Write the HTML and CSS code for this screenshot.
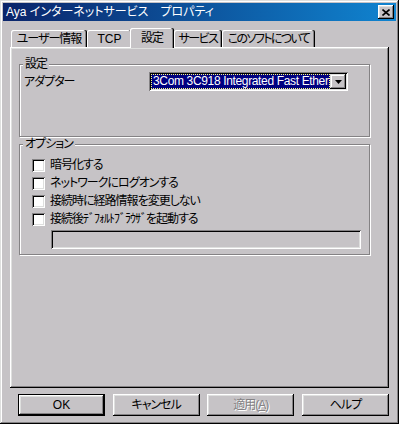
FILE: index.html
```html
<!DOCTYPE html>
<html lang="ja">
<head>
  <meta charset="UTF-8">
  <title>Aya インターネットサービス プロパティ</title>
  <link rel="stylesheet" href="styles.css">
</head>
<body>
  <div class="window">
    <div class="titlebar">
      <span class="title">Aya インターネットサービス　プロパティ</span>
      <button class="close" aria-label="閉じる">
        <svg width="8" height="7" viewBox="0 0 8 7"><path d="M0.5 0.5l7 6M7.5 0.5l-7 6" stroke="#000" stroke-width="1.6" fill="none"/></svg>
      </button>
    </div>

    <div class="content">
      <div class="tabs">
        <div class="tab tab-user">ユーザー情報</div>
        <div class="tab tab-tcp">TCP</div>
        <div class="tab tab-settings active">設定</div>
        <div class="tab tab-service">サービス</div>
        <div class="tab tab-about">このソフトについて</div>
      </div>

      <div class="panel">
        <fieldset class="group group-settings">
          <legend>設定</legend>
          <div class="field-row">
            <label class="field-label">アダプター</label>
            <div class="combo">
              <div class="combo-value"><span class="selected">3Com 3C918 Integrated Fast Ethernet</span></div>
              <div class="combo-btn">
                <svg width="7" height="4" viewBox="0 0 7 4"><path d="M0 0h7L3.5 4z" fill="#000"/></svg>
              </div>
            </div>
          </div>
        </fieldset>

        <fieldset class="group group-options">
          <legend>オプション</legend>
          <label class="check-row"><input type="checkbox"><span>暗号化する</span></label>
          <label class="check-row"><input type="checkbox"><span>ネットワークにログオンする</span></label>
          <label class="check-row"><input type="checkbox"><span>接続時に経路情報を変更しない</span></label>
          <label class="check-row"><input type="checkbox"><span>接続後ﾃﾞﾌｫﾙﾄﾌﾞﾗｳｻﾞを起動する</span></label>
          <input type="text" class="path" disabled>
        </fieldset>
      </div>

      <div class="buttons">
        <button class="btn default">OK</button>
        <button class="btn">キャンセル</button>
        <button class="btn" disabled>適用(<u>A</u>)</button>
        <button class="btn">ヘルプ</button>
      </div>
    </div>
  </div>
</body>
</html>
```

FILE: styles.css
```css
body {
  margin: 0;
  background: #c6c3c6;
  font: 12px/14px "Liberation Sans", "Noto Sans CJK JP", sans-serif;
  font-feature-settings: "palt";
  color: #000;
}
.window {
  width: 399px;
  height: 424px;
  box-sizing: border-box;
  padding: 3px;
  background: #c6c3c6;
  box-shadow: inset -1px -1px #000, inset 1px 1px #dedfde,
              inset -2px -2px #848284, inset 2px 2px #fff;
}
.titlebar {
  height: 18px;
  display: flex;
  align-items: center;
  justify-content: space-between;
  padding: 0 2px 0 3px;
  background: linear-gradient(to right, #0a246a, #1084d0);
  color: #fff;
}
.title {
  white-space: nowrap;
}
.close {
  width: 16px;
  height: 14px;
  padding: 0;
  border: 0;
  display: flex;
  align-items: center;
  justify-content: center;
  background: #c6c3c6;
  box-shadow: inset -1px -1px #000, inset 1px 1px #fff,
              inset -2px -2px #848284, inset 2px 2px #dedfde;
}
.content {
  padding: 7px 7px 0;
}
.tabs {
  display: flex;
  align-items: flex-end;
  height: 19px;
  padding-left: 1px;
  position: relative;
  z-index: 1;
}
.tab {
  height: 17px;
  box-sizing: border-box;
  padding-top: 2px;
  line-height: 15px;
  text-align: center;
  letter-spacing: -1px;
  white-space: nowrap;
  background: #c6c3c6;
  border-radius: 2px 2px 0 0;
  box-shadow: inset -1px 0 #000, inset -2px 0 #848284, inset 1px 1px #fff;
}
.tab-user { width: 76px; }
.tab-tcp { width: 45px; letter-spacing: 0; }
.tab-settings { width: 44px; }
.tab-service { width: 48px; letter-spacing: -1.5px; }
.tab-about { width: 93px; letter-spacing: -1.6px; }
.tab.active {
  height: 20px;
  margin: 0 0 -1px -2px;
  padding-top: 3px;
  position: relative;
}
.panel {
  height: 341px;
  box-sizing: border-box;
  padding: 11px 0 0 9px;
  box-shadow: inset -1px -1px #000, inset 1px 1px #fff,
              inset -2px -2px #848284, inset 2px 2px #dedfde;
}
.group {
  width: 351px;
  box-sizing: border-box;
  margin: 0;
  padding: 0 4px;
  min-inline-size: 0;
  border: 1px solid #848284;
  box-shadow: 1px 1px #fff, inset 1px 1px #fff;
}
.group legend {
  padding: 0 2px;
  margin-left: -1px;
  line-height: 12px;
  letter-spacing: -1px;
  background: #c6c3c6;
}
.group-settings {
  height: 79px;
  padding-top: 2px;
}
.group-options {
  height: 117px;
  margin-top: 1px;
  padding-top: 6px;
}
.field-row {
  display: flex;
  align-items: center;
}
.field-label {
  width: 125px;
  letter-spacing: -1px;
}
.combo {
  width: 199px;
  height: 19px;
  box-sizing: border-box;
  padding: 2px;
  display: flex;
  background: #fff;
  box-shadow: inset 1px 1px #848284, inset -1px -1px #fff,
              inset 2px 2px #000, inset -2px -2px #dedfde;
}
.combo-value {
  flex: 1;
  overflow: hidden;
}
.selected {
  display: block;
  height: 15px;
  box-sizing: border-box;
  padding-left: 1px;
  line-height: 13px;
  letter-spacing: -0.35px;
  white-space: nowrap;
  overflow: hidden;
  background: #000080;
  color: #fff;
  border: 1px dotted #ffff80;
}
.combo-btn {
  width: 16px;
  height: 15px;
  display: flex;
  align-items: center;
  justify-content: center;
  background: #c6c3c6;
  box-shadow: inset -1px -1px #000, inset 1px 1px #dedfde,
              inset -2px -2px #848284, inset 2px 2px #fff;
}
.check-row {
  display: flex;
  align-items: center;
  gap: 5px;
  height: 18px;
  padding-left: 8px;
  letter-spacing: -1px;
}
.check-row input {
  appearance: none;
  width: 13px;
  height: 13px;
  margin: 0;
  background: #fff;
  box-shadow: inset 1px 1px #848284, inset -1px -1px #fff,
              inset 2px 2px #000, inset -2px -2px #dedfde;
}
.path {
  display: block;
  width: 310px;
  height: 19px;
  box-sizing: border-box;
  margin: 2px 0 0 27px;
  border: 0;
  background: #c6c3c6;
  box-shadow: inset 1px 1px #848284, inset -1px -1px #fff,
              inset 2px 2px #000, inset -2px -2px #dedfde;
}
.buttons {
  display: flex;
  justify-content: space-between;
  padding: 6px 0 0 8px;
}
.btn {
  width: 87px;
  height: 22px;
  padding: 0;
  border: 0;
  font: inherit;
  letter-spacing: -1px;
  color: #000;
  background: #c6c3c6;
  box-shadow: inset -1px -1px #000, inset 1px 1px #fff,
              inset -2px -2px #848284, inset 2px 2px #dedfde;
}
.btn.default {
  letter-spacing: 0;
  box-shadow: inset 0 0 0 1px #000, inset -2px -2px #000, inset 2px 2px #fff,
              inset -3px -3px #848284, inset 3px 3px #dedfde;
}
.btn:disabled {
  color: #848284;
  text-shadow: 1px 1px #fff;
}
```
